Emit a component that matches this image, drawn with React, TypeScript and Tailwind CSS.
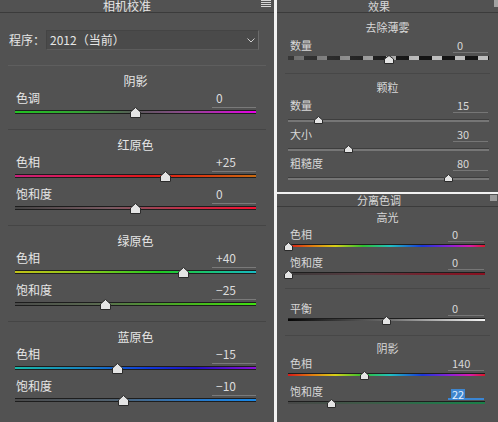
import React from "react";

function Thumb({ w, h }: { w: number; h: number }) {
  const s = Math.round(h * 0.45);
  return (
    <svg width={w} height={h} viewBox={`0 0 ${w} ${h}`} className="block">
      <polygon
        points={`0.5,${s} ${w / 2},0.5 ${w - 0.5},${s} ${w - 0.5},${h - 0.5} 0.5,${h - 0.5}`}
        fill="#e4e4e4"
        stroke="#2a2a2a"
        strokeWidth={1}
      />
    </svg>
  );
}

function Menu({ w, h, color }: { w: number; h: number; color: string }) {
  return (
    <svg width={w} height={h} viewBox={`0 0 ${w} ${h}`} className="block">
      <rect x="0" y="0" width={w} height="1" fill={color} />
      <rect x="0" y="2" width={w} height="1" fill={color} />
      <rect x="0" y="4" width={w} height="1" fill={color} />
      <rect x="0" y="6" width={w} height="1" fill={color} />
    </svg>
  );
}

function LTitle({ t }: { t: string }) {
  return (
    <div className="h-[18px] shrink-0 flex items-center justify-center pl-[15px] pr-[18px] leading-[18px]">
      {t}
    </div>
  );
}

function LSep() {
  return (
    <div className="h-[14px] shrink-0 pt-[7px] px-[8px]">
      <div className="h-px bg-[#454545]" />
    </div>
  );
}

function LRow({ label, value, v, track }: { label: string; value: string; v: number; track: string }) {
  const pct = (v + 100) / 2;
  return (
    <div className="h-[32px] shrink-0 flex flex-col">
      <div className="h-[16px] flex items-start justify-between pl-[16px] pr-[18px]">
        <span className="leading-[16px]">{label}</span>
        <span className="w-[44px] h-[18px] shrink-0 border-b border-[#7a7a7a] pl-[4px] leading-[16px] text-[#dcdcdc]">
          {value}
        </span>
      </div>
      <div className="relative mt-[4px] ml-[15px] mr-[18px]">
        <div className={"h-[4px] border-y border-[#1d1d1d] " + track} />
        <div className="absolute top-[-3px]" style={{ left: `calc(${pct}% - 5.5px)` }}>
          <Thumb w={11} h={11} />
        </div>
      </div>
    </div>
  );
}

function RTitle({ t, h }: { t: string; h: string }) {
  return <div className={"shrink-0 flex items-center justify-center " + h}>{t}</div>;
}

function RRowU({
  label,
  value,
  pct,
  track,
  wrap,
  thumbTop,
  tw,
  th,
}: {
  label: string;
  value: string;
  pct: number;
  track: string;
  wrap: string;
  thumbTop: string;
  tw: number;
  th: number;
}) {
  return (
    <div className="h-[29px] shrink-0 flex flex-col">
      <div className="h-[18px] flex items-start justify-between pl-[13px] pr-[10px]">
        <span className="leading-[18px]">{label}</span>
        <span className="w-[35px] h-[17px] shrink-0 border-b border-[#767676] pl-[4px] leading-[18px]">{value}</span>
      </div>
      <div className={"relative ml-[11px] mr-[9px] " + wrap}>
        <div className={track} />
        <div className={"absolute " + thumbTop} style={{ left: `calc(${pct}% - ${tw / 2}px)` }}>
          <Thumb w={tw} h={th} />
        </div>
      </div>
    </div>
  );
}

function RRowL({
  label,
  value,
  pct,
  track,
  hi,
}: {
  label: string;
  value: string;
  pct: number;
  track: string;
  hi?: boolean;
}) {
  return (
    <div className="h-[28px] shrink-0 flex flex-col">
      <div className="h-[16px] flex items-start justify-between pl-[13px] pr-[14px]">
        <span className="leading-[16px]">{label}</span>
        {hi ? (
          <span className="w-[36px] h-[17px] shrink-0 border-b-2 border-[#3a86d4] pl-[3px] pt-[3px]">
            <span className="inline-block leading-[10px] px-px bg-[#3e86cf] text-[#e4f1ff]">{value}</span>
          </span>
        ) : (
          <span className="w-[36px] h-[16px] shrink-0 border-b border-[#767676] pl-[4px] leading-[16px]">{value}</span>
        )}
      </div>
      <div className="relative mt-[2px] ml-[11px] mr-[13px]">
        <div className={"h-[3px] border-t border-[#1e1e1e] " + track} />
        <div className="absolute top-[-2px]" style={{ left: `calc(${pct}% - 4.5px)` }}>
          <Thumb w={9} h={9} />
        </div>
      </div>
    </div>
  );
}

function RSep({ h, pt }: { h: string; pt: string }) {
  return (
    <div className={"shrink-0 px-[8px] " + h + " " + pt}>
      <div className="h-px bg-[#474747]" />
    </div>
  );
}

const rainbow =
  "bg-[linear-gradient(90deg,#d81818_0%,#e07a10_12%,#d8d018_24%,#2fc02f_38%,#20c0c0_52%,#1838d8_68%,#8a20d8_82%,#d818b0_92%,#d81828_100%)]";
const grain = "h-[3px] border-t border-[#3e3e3e] bg-[#767676]";

export default function App() {
  return (
    <div className="w-[498px] h-[422px] overflow-hidden flex bg-[#525252] font-['Noto_Sans_CJK_SC',sans-serif]">
      {/* LEFT PANEL */}
      <div className="w-[274px] shrink-0 flex flex-col text-[12px] text-[#e6e6e6]">
        <div className="h-[13px] shrink-0 border-b border-[#3b3b3b] relative flex justify-center pr-[20px]">
          <span className="leading-[12px]">相机校准</span>
          <div className="absolute left-[261px] top-0">
            <Menu w={10} h={8} color="#d6d6d6" />
          </div>
        </div>
        <div className="mt-[17px] h-[20px] shrink-0 flex items-center pl-[9px]">
          <span className="w-[37px] shrink-0 leading-[20px]">程序：</span>
          <div className="w-[213px] h-[20px] flex items-center justify-between bg-[#4a4a4a] border border-[#444444] border-r-[#6a6a6a] border-b-[#5c5c5c] pl-[3px] pr-[3px]">
            <span className="leading-[18px]">2012（当前）</span>
            <svg width="8" height="5" viewBox="0 0 8 5" className="block">
              <polyline points="0.5,0.5 4,4 7.5,0.5" fill="none" stroke="#cfcfcf" strokeWidth="1" />
            </svg>
          </div>
        </div>
        <div className="mt-[15px] mx-[8px] h-px shrink-0 bg-[#5e5e5e]" />
        <div className="h-[6px] shrink-0" />
        <LTitle t="阴影" />
        <LRow
          label="色调"
          value="0"
          v={0}
          track="bg-[linear-gradient(90deg,#22c222_0%,#36a036_28%,#585858_50%,#8a4a8a_70%,#e600e6_100%)]"
        />
        <LSep />
        <LTitle t="红原色" />
        <LRow
          label="色相"
          value="+25"
          v={25}
          track="bg-[linear-gradient(90deg,#c8207a_0%,#e01848_30%,#e01818_55%,#d84010_80%,#c86a10_100%)]"
        />
        <LRow
          label="饱和度"
          value="0"
          v={0}
          track="bg-[linear-gradient(90deg,#454545_0%,#7a5a62_40%,#c03048_70%,#f41030_100%)]"
        />
        <LSep />
        <LTitle t="绿原色" />
        <LRow
          label="色相"
          value="+40"
          v={40}
          track="bg-[linear-gradient(90deg,#c0c018_0%,#8ac81c_30%,#22c822_60%,#18c08a_85%,#18b8c0_100%)]"
        />
        <LRow
          label="饱和度"
          value="−25"
          v={-25}
          track="bg-[linear-gradient(90deg,#4a4a4a_0%,#5a6a50_35%,#48b020_70%,#40e010_100%)]"
        />
        <LSep />
        <LTitle t="蓝原色" />
        <LRow
          label="色相"
          value="−15"
          v={-15}
          track="bg-[linear-gradient(90deg,#18b8a8_0%,#1880c0_30%,#1038d8_55%,#2010c0_75%,#8a10d8_100%)]"
        />
        <LRow
          label="饱和度"
          value="−10"
          v={-10}
          track="bg-[linear-gradient(90deg,#4a4a4a_0%,#50606e_40%,#2878c8_75%,#1888e8_100%)]"
        />
      </div>

      {/* DIVIDER */}
      <div className="w-[3px] shrink-0 bg-[#f2f2f2]" />

      {/* RIGHT PANEL */}
      <div className="flex-1 flex flex-col text-[11px] text-[#d8d8d8]">
        <div className="h-[192px] shrink-0 flex flex-col">
          <div className="h-[13px] shrink-0 border-b border-[#3b3b3b] relative flex justify-center pr-[17px]">
            <span className="leading-[12px]">效果</span>
            <div className="absolute left-[217px] top-0 w-[7px] h-[7px] bg-[#a2a2a2]" />
          </div>
          <div className="h-[5px] shrink-0" />
          <RTitle t="去除薄雾" h="h-[18px]" />
          <RRowU
            label="数量"
            value="0"
            pct={50}
            wrap="mt-[2px]"
            track="h-[4px] bg-[linear-gradient(90deg,rgba(70,70,70,0.7),rgba(0,0,0,0)_65%),repeating-linear-gradient(90deg,#141414_0px,#141414_6px,#bdbdbd_6px,#bdbdbd_16px,#141414_16px,#141414_23px)]"
            thumbTop="top-[-1px]"
            tw={10}
            th={9}
          />
          <RSep h="h-[13px]" pt="pt-[8px]" />
          <RTitle t="颗粒" h="h-[18px]" />
          <RRowU label="数量" value="15" pct={15} wrap="mt-[5px]" track={grain} thumbTop="top-[-3px]" tw={9} th={8} />
          <RRowU label="大小" value="30" pct={30} wrap="mt-[5px]" track={grain} thumbTop="top-[-3px]" tw={9} th={8} />
          <RRowU label="粗糙度" value="80" pct={80} wrap="mt-[5px]" track={grain} thumbTop="top-[-3px]" tw={9} th={8} />
        </div>
        <div className="h-[2px] shrink-0 bg-[#f2f2f2]" />
        <div className="flex-1 flex flex-col">
          <div className="h-[13px] shrink-0 border-b border-[#3b3b3b] relative flex justify-center pr-[17px]">
            <span className="leading-[12px]">分离色调</span>
            <div className="absolute left-[213px] top-[1px] w-[7px] h-[6px] bg-[#9a9a9a]" />
          </div>
          <div className="h-[1px] shrink-0" />
          <RTitle t="高光" h="h-[18px]" />
          <RRowL label="色相" value="0" pct={0} track={rainbow} />
          <RRowL
            label="饱和度"
            value="0"
            pct={0}
            track="bg-[linear-gradient(90deg,#3a3a3a_0%,#5a3a40_40%,#7e1a28_80%,#8a1020_100%)]"
          />
          <RSep h="h-[18px]" pt="pt-[6px]" />
          <RRowL label="平衡" value="0" pct={50} track="bg-[linear-gradient(90deg,#050505_0%,#6a6a6a_50%,#f4f4f4_100%)]" />
          <RSep h="h-[13px]" pt="pt-[7px]" />
          <RTitle t="阴影" h="h-[14px]" />
          <RRowL label="色相" value="140" pct={(140 / 360) * 100} track={rainbow} />
          <RRowL
            label="饱和度"
            value="22"
            pct={22}
            hi
            track="bg-[linear-gradient(90deg,#474747_0%,#3f5a48_40%,#25744a_75%,#1a8048_100%)]"
          />
        </div>
      </div>
    </div>
  );
}
